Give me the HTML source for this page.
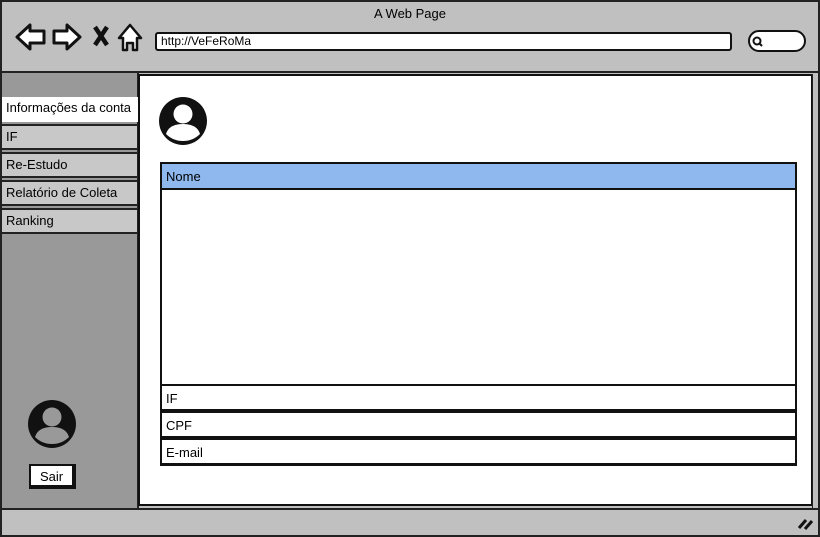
<!DOCTYPE html>
<html><head><style>
*{box-sizing:border-box;margin:0;padding:0}
body{width:820px;height:537px;position:relative;background:#fff;font-family:"Liberation Sans",sans-serif;font-size:13px;color:#000;overflow:hidden}
.a{position:absolute}
.tab{position:absolute;left:2px;width:137px;height:26px;background:#c8c8c8;border:2px solid #222;border-left:none;padding:3px 0 0 4px}
.row{position:absolute;left:160px;width:637px;height:27px;border:2px solid #111;background:#fff;padding:5px 0 0 4px}
</style></head><body>
<div class="a" style="left:0;top:0;width:820px;height:537px;border:2px solid #222;background:#c0c0c0"></div>
<div class="a" style="left:0;top:6px;width:820px;text-align:center;font-size:13px">A Web Page</div>
<svg class="a" style="left:14px;top:22px" width="135" height="32" viewBox="0 0 135 32">
<path d="M3 15 L16 3 L16 9 L30 9 L30 21 L16 21 L16 27 Z" fill="#fff" stroke="#111" stroke-width="3" stroke-linejoin="round"/>
<path d="M66 15 L53 3 L53 9 L40 9 L40 21 L53 21 L53 27 Z" fill="#fff" stroke="#111" stroke-width="3" stroke-linejoin="round"/>
<path d="M81 5 L93 23 M93 5 L81 23" stroke="#111" stroke-width="4.5"/>
<path d="M105 16 L116 3 L127 16 L123 16 L123 28 L119 28 L119 21 L113 21 L113 28 L109 28 L109 16 Z" fill="#fff" stroke="#111" stroke-width="2.5" stroke-linejoin="round"/>
</svg>
<div class="a" style="left:155px;top:32px;width:577px;height:19px;background:#fff;border:2px solid #111;border-radius:3px;padding:0 0 0 4px;font-size:12px;line-height:15px">http://VeFeRoMa</div>
<div class="a" style="left:748px;top:30px;width:58px;height:22px;background:#fff;border:2px solid #111;border-radius:11px"></div>
<svg class="a" style="left:752px;top:36px" width="12" height="12"><circle cx="5" cy="5" r="3.5" fill="none" stroke="#111" stroke-width="2"/><path d="M7 7 L10 10" stroke="#111" stroke-width="2"/></svg>
<div class="a" style="left:2px;top:71px;width:816px;height:2px;background:#222"></div>
<div class="a" style="left:2px;top:73px;width:137px;height:437px;background:#999;border-right:2px solid #222"></div>
<div class="a" style="left:2px;top:97px;width:138px;height:25px;background:#fff;padding:3px 0 0 4px">Informações da conta</div>
<div class="tab" style="top:124px">IF</div>
<div class="tab" style="top:152px">Re-Estudo</div>
<div class="tab" style="top:180px">Relatório de Coleta</div>
<div class="tab" style="top:208px">Ranking</div>
<div class="a" style="left:138px;top:74px;width:675px;height:432px;background:#fff;border:2px solid #111"></div>
<div class="a" style="left:812px;top:74px;width:6px;height:436px;background:#c0c0c0;border-left:1px solid #222"></div>
<div class="a" style="left:2px;top:508px;width:816px;height:2px;background:#222"></div>
<svg class="a" style="left:797px;top:515px" width="20" height="16"><path d="M2 13 L9 5 M8 14 L15 6" stroke="#111" stroke-width="3"/></svg>
<svg class="a" style="left:158px;top:96px" width="50" height="50"><circle cx="25" cy="25" r="24" fill="#111"/><circle cx="25" cy="18" r="9.5" fill="#fff"/><path d="M8 38 Q11 28 25 28 Q39 28 42 38 Q35 45 25 45 Q15 45 8 38Z" fill="#fff"/></svg>
<svg class="a" style="left:27px;top:399px" width="50" height="50"><circle cx="25" cy="25" r="24" fill="#111"/><circle cx="25" cy="18" r="9.5" fill="#999"/><path d="M8 38 Q11 28 25 28 Q39 28 42 38 Q35 45 25 45 Q15 45 8 38Z" fill="#999"/></svg>
<div class="a" style="left:29px;top:464px;width:47px;height:25px;background:#fff;border:2px solid #111;border-right-width:4px;border-bottom-width:4px;text-align:center;padding-top:3px">Sair</div>
<div class="a" style="left:160px;top:162px;width:637px;height:304px;border:2px solid #111;background:#fff"></div>
<div class="a" style="left:160px;top:162px;width:637px;height:28px;border:2px solid #111;background:#8fb8ef;padding:5px 0 0 4px">Nome</div>
<div class="row" style="top:384px">IF</div>
<div class="row" style="top:411px">CPF</div>
<div class="row" style="top:438px">E-mail</div>
</body></html>
